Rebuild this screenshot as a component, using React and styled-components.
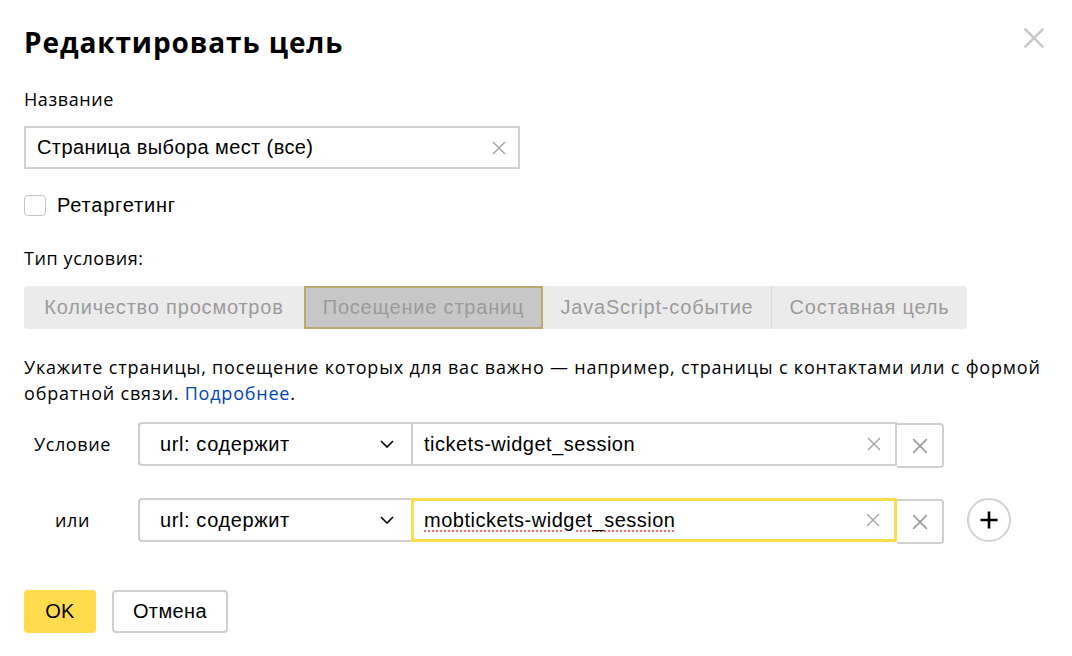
import React from "react";
import styled, { createGlobalStyle } from "styled-components";

const Global = createGlobalStyle`
  html, body { margin: 0; padding: 0; background: #fff; }
  body { font-family: "Liberation Sans", Arial, sans-serif; color: #000; }
  * { box-sizing: border-box; }
`;

const HUMAN = `"Open Sans", "Noto Sans", sans-serif`;
const HELV = `"Liberation Sans", Arial, sans-serif`;

const Page = styled.div`
  position: relative;
  width: 1072px;
  height: 656px;
  padding: 25px 24px 0 24px;
  display: flex;
  flex-direction: column;
  align-items: flex-start;
`;

const Title = styled.h1`
  margin: 0;
  font-family: ${HUMAN};
  font-size: 28px;
  line-height: 34px;
  font-weight: 700;
  letter-spacing: 0.9px;
`;

const CloseButton = styled.button`
  position: absolute;
  top: 26px;
  right: 26px;
  width: 24px;
  height: 24px;
  padding: 0;
  border: 0;
  background: none;
  display: flex;
  align-items: center;
  justify-content: center;
`;

const Label = styled.div`
  margin-top: ${(p) => p.$mt || 0}px;
  font-family: ${HUMAN};
  font-size: 18px;
  letter-spacing: 0.6px;
  line-height: 24px;
`;

const TextInputBox = styled.div`
  margin-top: 15px;
  width: 496px;
  height: 43px;
  border: 2px solid #cfcfcf;
  display: flex;
  align-items: center;
  padding: 0 12px 0 11px;
  font-family: ${HELV};
  font-size: 20px;
  letter-spacing: 0.4px;
  justify-content: space-between;
`;

const CheckRow = styled.label`
  margin-top: 26px;
  display: flex;
  align-items: center;
  gap: 11px;
  font-family: ${HELV};
  font-size: 20px;
  letter-spacing: 0.8px;
  line-height: 21px;
`;

const CheckBox = styled.span`
  width: 22px;
  height: 21px;
  border: 1px solid #c4c4c4;
  border-radius: 4px;
  background: #fff;
`;

const Tabs = styled.div`
  margin-top: 16px;
  display: flex;
  height: 43px;
  background: #ebebeb;
  border-radius: 4px;
`;

const Tab = styled.div`
  width: ${(p) => p.$w}px;
  height: 43px;
  display: flex;
  align-items: center;
  justify-content: center;
  font-family: ${HELV};
  font-size: 20px;
  letter-spacing: 0.8px;
  color: #9b9b9b;
  white-space: nowrap;
  background: ${(p) => (p.$active ? "#c7c7c7" : "transparent")};
  border: ${(p) => (p.$active ? "2px solid #bba86f" : "none")};
  border-left: ${(p) => (p.$divider ? "1px solid #dadada" : p.$active ? "2px solid #bba86f" : "none")};
  border-radius: ${(p) => (p.$first ? "4px 0 0 4px" : p.$last ? "0 4px 4px 0" : "0")};
`;

const Paragraph = styled.p`
  margin: 25px 0 0 0;
  font-family: ${HUMAN};
  font-size: 18px;
  letter-spacing: 0.8px;
  line-height: 26px;
  width: 1030px;
`;

const Link = styled.a`
  color: #0044bb;
  text-decoration: none;
`;

const CondRow = styled.div`
  margin-top: ${(p) => p.$mt}px;
  display: flex;
  align-items: flex-start;
`;

const CondLabel = styled.div`
  width: 97px;
  margin-right: 17px;
  text-align: center;
  font-family: ${HUMAN};
  font-size: 18px;
  letter-spacing: 0.6px;
  line-height: 44px;
`;

const Select = styled.div`
  width: 273px;
  height: 44px;
  border: 2px solid #cfcfcf;
  border-right: none;
  border-radius: 4px 0 0 4px;
  display: flex;
  align-items: center;
  justify-content: space-between;
  padding: 0 17px 0 20px;
  font-family: ${HELV};
  font-size: 20px;
  letter-spacing: 0.6px;
`;

const CondInput = styled.div`
  width: 486px;
  height: 44px;
  border: ${(p) => (p.$focused ? "3px solid #ffdb4d" : "2px solid #cfcfcf")};
  display: flex;
  align-items: center;
  justify-content: space-between;
  padding: 0 14px 0 ${(p) => (p.$focused ? 10 : 11)}px;
  font-family: ${HELV};
  font-size: 20px;
  letter-spacing: 0.5px;
`;

const Spell = styled.span`
  text-decoration: underline dotted #f06a6a;
  text-decoration-thickness: 2px;
  text-underline-offset: 4px;
`;

const RemoveButton = styled.button`
  width: 47px;
  height: 45px;
  margin-top: 1px;
  border: 2px solid #cfcfcf;
  border-left: none;
  border-radius: 0 4px 4px 0;
  background: #fff;
  padding: 0;
  display: flex;
  align-items: center;
  justify-content: center;
`;

const AddButton = styled.button`
  margin-left: 23px;
  width: 44px;
  height: 44px;
  border-radius: 50%;
  border: 2px solid #d2d2d2;
  background: #fff;
  padding: 0;
  display: flex;
  align-items: center;
  justify-content: center;
`;

const Actions = styled.div`
  margin-top: 46px;
  display: flex;
  gap: 16px;
`;

const Button = styled.button`
  height: 43px;
  padding: 0;
  border-radius: 4px;
  font-family: ${HELV};
  font-size: 20px;
  letter-spacing: 0.4px;
  color: #000;
  background: ${(p) => (p.$primary ? "#ffdb4d" : "#fff")};
  border: ${(p) => (p.$primary ? "none" : "2px solid #cfcfcf")};
  width: ${(p) => (p.$primary ? 72 : 116)}px;
`;

const Cross = ({ size = 14, color = "#9e9e9e", w = 1.3 }) => (
  <svg width={size} height={size} viewBox="0 0 14 14">
    <path d="M1 1L13 13M13 1L1 13" stroke={color} strokeWidth={w} fill="none" />
  </svg>
);

const Chevron = () => (
  <svg width="14" height="8" viewBox="0 0 14 8">
    <path d="M1 1L7 7L13 1" stroke="#000" strokeWidth="1.6" fill="none" />
  </svg>
);

const Plus = () => (
  <svg width="20" height="20" viewBox="0 0 20 20">
    <path d="M10 1.5V18.5M1.5 10H18.5" stroke="#000" strokeWidth="2.6" fill="none" />
  </svg>
);

export default function App() {
  return (
    <>
      <Global />
      <Page>
        <Title>Редактировать цель</Title>
        <CloseButton aria-label="Закрыть">
          <Cross size={22} color="#c8c8c8" w={1.6} />
        </CloseButton>

        <Label $mt={28}>Название</Label>
        <TextInputBox>
          <span>Страница выбора мест (все)</span>
          <Cross />
        </TextInputBox>

        <CheckRow>
          <CheckBox />
          <span>Ретаргетинг</span>
        </CheckRow>

        <Label $mt={30}>Тип условия:</Label>
        <Tabs>
          <Tab $w={280} $first>Количество просмотров</Tab>
          <Tab $w={239} $active>Посещение страниц</Tab>
          <Tab $w={228}>JavaScript-событие</Tab>
          <Tab $w={196} $divider $last>Составная цель</Tab>
        </Tabs>

        <Paragraph>
          Укажите страницы, посещение которых для вас важно — например, страницы с контактами или с формой
          обратной связи. <Link href="#">Подробнее</Link>.
        </Paragraph>

        <CondRow $mt={16}>
          <CondLabel>Условие</CondLabel>
          <Select>
            <span>url: содержит</span>
            <Chevron />
          </Select>
          <CondInput>
            <span>tickets-widget_session</span>
            <Cross />
          </CondInput>
          <RemoveButton aria-label="Удалить">
            <Cross size={16} color="#9a9a9a" w={1.4} />
          </RemoveButton>
        </CondRow>

        <CondRow $mt={30}>
          <CondLabel>или</CondLabel>
          <Select>
            <span>url: содержит</span>
            <Chevron />
          </Select>
          <CondInput $focused>
            <Spell>mobtickets-widget_session</Spell>
            <Cross />
          </CondInput>
          <RemoveButton aria-label="Удалить">
            <Cross size={16} color="#9a9a9a" w={1.4} />
          </RemoveButton>
          <AddButton aria-label="Добавить">
            <Plus />
          </AddButton>
        </CondRow>

        <Actions>
          <Button $primary>OK</Button>
          <Button>Отмена</Button>
        </Actions>
      </Page>
    </>
  );
}
